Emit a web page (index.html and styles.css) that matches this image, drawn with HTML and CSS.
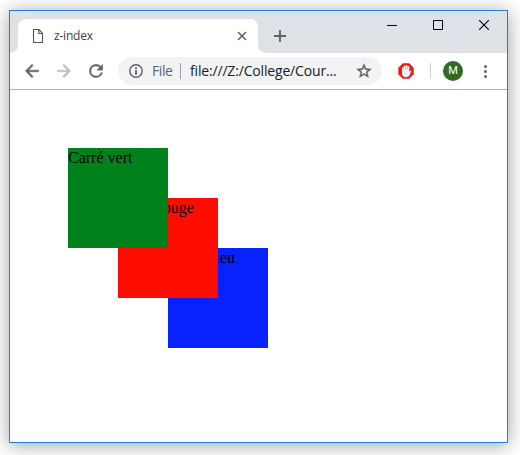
FILE: index.html
```html
<!DOCTYPE html>
<html lang="fr">
<head>
<meta charset="utf-8">
<title>z-index</title>
<link rel="stylesheet" href="styles.css">
</head>
<body>
<div class="window">
  <header class="titlebar">
    <div class="tab">
      <svg class="page-icon" width="12" height="16" viewBox="0 0 12 16"><path d="M1.5 1.5h5.6l3.4 3.6v9.4h-9z M6.8 1.5v4h3.7" fill="none" stroke="#505357" stroke-width="1.1"/></svg>
      <span class="tab-title">z-index</span>
      <svg class="tab-close" width="10" height="10" viewBox="0 0 10 10"><path d="M1 1l8 8M9 1L1 9" stroke="#5f6368" stroke-width="1.6"/></svg>
    </div>
    <svg class="new-tab" width="12" height="12" viewBox="0 0 12 12"><path d="M6 0v12M0 6h12" stroke="#5f6368" stroke-width="1.9"/></svg>
    <div class="controls">
      <svg width="10" height="10" viewBox="0 0 10 10"><path d="M0 5.5h10" stroke="#000"/></svg>
      <svg width="10" height="10" viewBox="0 0 10 10"><path d="M.5.5h9v9h-9z" fill="none" stroke="#000"/></svg>
      <svg width="10" height="10" viewBox="0 0 10 10"><path d="M0 0l10 10M10 0L0 10" stroke="#000" stroke-width="1.1"/></svg>
    </div>
  </header>
  <nav class="toolbar">
    <svg class="back" width="20" height="20" viewBox="0 0 24 24"><path d="M20 11H7.83l5.59-5.59L12 4l-8 8 8 8 1.41-1.41L7.83 13H20z" fill="#5f6368" stroke="#5f6368" stroke-width=".6"/></svg>
    <svg class="forward" width="20" height="20" viewBox="0 0 24 24"><path d="M12 4l-1.41 1.41L16.17 11H4v2h12.17l-5.58 5.59L12 20l8-8z" fill="#babcbe" stroke="#babcbe" stroke-width=".6"/></svg>
    <svg class="reload" width="20" height="20" viewBox="0 0 24 24"><path d="M17.65 6.35A7.96 7.96 0 0 0 12 4a8 8 0 1 0 7.73 10h-2.08A6 6 0 1 1 12 6c1.66 0 3.14.69 4.22 1.78L13 11h7V4z" fill="#5f6368" stroke="#5f6368" stroke-width=".5"/></svg>
    <div class="address">
      <svg class="info" width="14" height="14" viewBox="0 0 14 14"><circle cx="7" cy="7" r="6.2" fill="none" stroke="#5f6368" stroke-width="1.4"/><path d="M7 3.2v1.7M7 6v4.8" stroke="#5f6368" stroke-width="1.8"/></svg>
      <span class="scheme">File</span>
      <span class="divider"></span>
      <span class="url">file:///Z:/College/Cour...</span>
      <svg class="star" width="16" height="16" viewBox="1 1 22 22"><path d="M22 9.24l-7.19-.62L12 2 9.19 8.63 2 9.24l5.46 4.73L5.82 21 12 17.27 18.18 21l-1.63-7.03zM12 15.4l-3.76 2.27 1-4.28-3.32-2.88 4.38-.38L12 6.1l1.71 4.04 4.38.38-3.32 2.88 1 4.28z" fill="#5f6368" stroke="#5f6368" stroke-width=".6"/></svg>
    </div>
    <svg class="blocker" width="16" height="16" viewBox="0 0 16 16"><path d="M4.8.3h6.4l4.5 4.5v6.4l-4.5 4.5H4.8L.3 11.2V4.8z" fill="#e51d1d"/><path d="M4 7V4.4q.9-.9 1.5 0V7h.2V3q.9-.9 1.7 0v3.5h.2V2.4q.9-.9 1.8 0v4.1h.2V3.5q.9-.8 1.7 0v5.2l1-1.2q1.1 0 .9.7l-1.6 4Q10.8 14.2 8 14.2q-4 0-4-4z" fill="#eeecec"/></svg>
    <span class="separator"></span>
    <span class="avatar">M</span>
    <svg class="menu" width="4" height="14" viewBox="0 0 4 14"><g fill="#5f6368"><circle cx="2.5" cy="2.5" r="1.5"/><circle cx="2.5" cy="7.5" r="1.5"/><circle cx="2.5" cy="12.5" r="1.5"/></g></svg>
  </nav>
  <main class="page">
    <div class="square green">Carré vert</div>
    <div class="square red">Carré rouge</div>
    <div class="square blue">Carré bleu</div>
  </main>
</div>
</body>
</html>
```

FILE: styles.css
```css
* { box-sizing: border-box; }

body {
  margin: 0;
  padding: 10px 12px 12px 9px;
  height: 455px;
  overflow: hidden;
  background: #fff;
  font-family: "Open Sans", "Noto Sans", sans-serif;
}

svg { display: block; flex: none; }

.window {
  display: flex;
  flex-direction: column;
  height: 433px;
  border: 1px solid #1883d7;
  background: #fff;
  box-shadow: 0 2px 18px rgba(0, 0, 0, .38);
}

.titlebar {
  display: flex;
  align-items: flex-start;
  height: 42px;
  padding: 8px 18px 0 8px;
  background: #dee1e6;
}

.tab {
  position: relative;
  display: flex;
  align-items: center;
  width: 240px;
  height: 34px;
  padding: 0 11px 0 14px;
  border-radius: 8px 8px 0 0;
  background: #fff;
}

.tab::before,
.tab::after {
  content: "";
  position: absolute;
  bottom: 0;
  width: 8px;
  height: 8px;
}

.tab::before {
  left: -8px;
  background: radial-gradient(circle at 0 0, transparent 7.5px, #fff 8.5px);
}

.tab::after {
  right: -8px;
  background: radial-gradient(circle at 100% 0, transparent 7.5px, #fff 8.5px);
}

.tab-title {
  margin-left: 10px;
  color: #3c4043;
  font-size: 12px;
  line-height: 16px;
  letter-spacing: -.2px;
}

.tab-close { margin-left: auto; }

.new-tab { margin: 11px 0 0 16px; }

.controls {
  display: flex;
  gap: 36px;
  margin: 1px 0 0 auto;
}

.toolbar {
  display: flex;
  align-items: center;
  height: 37px;
  padding: 0 20px 0 12px;
  border-bottom: 1px solid #b1b2b4;
}

.forward, .reload { margin-left: 12px; }

.address {
  display: flex;
  align-items: center;
  width: 264px;
  height: 28px;
  margin-left: 12px;
  padding: 0 10px 0 11px;
  border-radius: 14px;
  background: #f1f3f4;
  font-size: 14px;
  line-height: 20px;
  white-space: nowrap;
}

.scheme {
  width: 21px;
  margin-left: 9px;
  color: #5f6368;
  letter-spacing: -.4px;
}

.divider {
  width: 1px;
  height: 16px;
  margin-left: 7px;
  background: #9aa0a6;
}

.url {
  margin-left: 9px;
  color: #202124;
  letter-spacing: -.17px;
}

.star { margin-left: auto; }

.blocker { margin-left: 16px; }

.separator {
  width: 1px;
  height: 16px;
  margin-left: 16px;
  background: #cdcfd1;
}

.avatar {
  width: 20px;
  height: 20px;
  margin-left: 12px;
  border-radius: 50%;
  background: #2f6b25;
  color: #fff;
  font: 11px/20px Roboto, sans-serif;
  text-align: center;
}

.menu { margin-left: auto; }

.page {
  position: relative;
  flex: 1;
  font: 16px/20px "Liberation Serif", serif;
  color: #000;
}

.square {
  position: absolute;
  width: 100px;
  height: 100px;
}

.green {
  z-index: 3;
  top: 58px;
  left: 58px;
  background: #00811b;
}

.red {
  z-index: 2;
  top: 108px;
  left: 108px;
  background: #ff0d00;
}

.blue {
  z-index: 1;
  top: 158px;
  left: 158px;
  background: #0822ff;
}
```
